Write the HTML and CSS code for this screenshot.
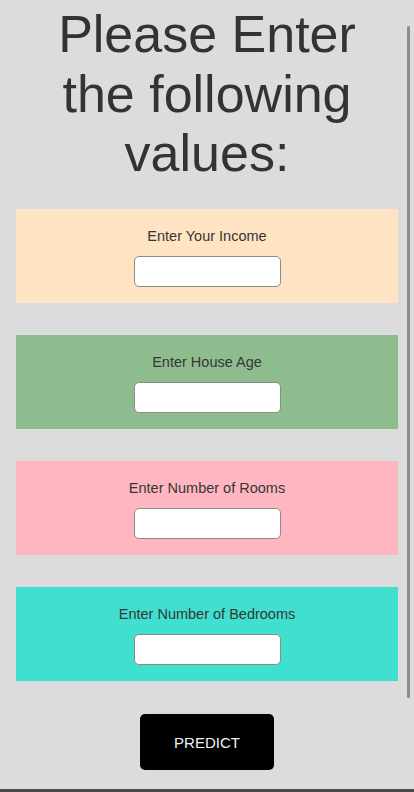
FILE: index.html
```html
<!DOCTYPE html>
<html lang="en">
<head>
<meta charset="utf-8">
<meta name="viewport" content="width=device-width, initial-scale=1">
<title>House Price Prediction</title>
<link rel="stylesheet" href="styles.css">
</head>
<body>
<main class="page">
  <h1 class="title">Please Enter the following values:</h1>
  <form class="form">
    <div class="card card-income">
      <label class="card-label" for="income">Enter Your Income</label>
      <input class="card-input" id="income" type="text">
    </div>
    <div class="card card-age">
      <label class="card-label" for="age">Enter House Age</label>
      <input class="card-input" id="age" type="text">
    </div>
    <div class="card card-rooms">
      <label class="card-label" for="rooms">Enter Number of Rooms</label>
      <input class="card-input" id="rooms" type="text">
    </div>
    <div class="card card-bedrooms">
      <label class="card-label" for="bedrooms">Enter Number of Bedrooms</label>
      <input class="card-input" id="bedrooms" type="text">
    </div>
    <button class="predict" type="button">PREDICT</button>
  </form>
</main>
<div class="scrollbar"></div>
<div class="bottom-edge"></div>
</body>
</html>
```
FILE: styles.css
```css
html, body {
  margin: 0;
  padding: 0;
  height: 100%;
  overflow: hidden;
}
body {
  background: #dcdcdc;
  font-family: "Liberation Sans", Arial, Helvetica, sans-serif;
  color: #333333;
}
.page {
  padding: 5px 16px 0 16px;
  display: flex;
  flex-direction: column;
}
.title {
  margin: 0 auto;
  width: 340px;
  font-size: 52px;
  line-height: 59.5px;
  font-weight: normal;
  text-align: center;
  color: #333333;
}
.form {
  margin-top: 25.5px;
  display: flex;
  flex-direction: column;
  gap: 32px;
  align-items: stretch;
}
.card {
  display: flex;
  flex-direction: column;
  align-items: center;
  padding: 18px 0 16px;
  height: 94px;
  box-sizing: border-box;
}
.card-label {
  font-size: 14.5px;
  line-height: 18px;
  color: #363636;
}
.card-input {
  margin-top: 11px;
  width: 147px;
  height: 31px;
  box-sizing: border-box;
  border: 1px solid #8e8a88;
  border-radius: 5px;
  background: #ffffff;
  padding: 0 6px;
  font-family: inherit;
  font-size: 14px;
}
.card-income { background: #ffe4c4; }
.card-age { background: #8fbc8f; }
.card-rooms { background: #ffb6c1; }
.card-bedrooms { background: #40e0d0; }
.predict {
  align-self: center;
  margin-top: 1px;
  width: 134px;
  height: 56px;
  border: none;
  border-radius: 5px;
  background: #000000;
  color: #f2f2f2;
  font-family: "Liberation Sans", Arial, Helvetica, sans-serif;
  font-size: 15px;
  padding: 0;
}
.scrollbar {
  position: fixed;
  left: 407px;
  top: 26px;
  width: 3px;
  height: 672px;
  background: #8c8c8c;
  border-radius: 1.5px;
}
.bottom-edge {
  position: fixed;
  left: 0;
  right: 0;
  bottom: 0;
  height: 3px;
  background: #4a4a4a;
}
```
